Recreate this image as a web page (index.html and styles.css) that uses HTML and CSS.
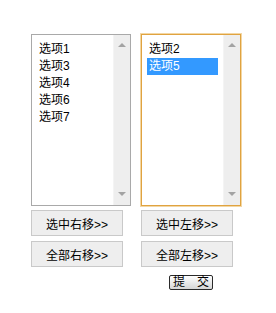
FILE: index.html
```
<!DOCTYPE html>
<html lang="zh-CN">

<head>
    <meta charset="UTF-8">
    <meta name="viewport" content="width=device-width, initial-scale=1.0">
    <title>选项移动</title>
    <link rel="stylesheet" href="styles.css">
</head>

<body>
    <div class="wrap">
        <div class="col">
            <div class="listbox">
                <ul class="items">
                    <li>选项1</li>
                    <li>选项3</li>
                    <li>选项4</li>
                    <li>选项6</li>
                    <li>选项7</li>
                </ul>
                <div class="bar">
                    <span class="up"></span>
                    <span class="down"></span>
                </div>
            </div>
            <button class="btn">选中右移&gt;&gt;</button>
            <button class="btn">全部右移&gt;&gt;</button>
        </div>
        <div class="col">
            <div class="listbox focus">
                <ul class="items">
                    <li>选项2</li>
                    <li class="active">选项5</li>
                </ul>
                <div class="bar">
                    <span class="up"></span>
                    <span class="down"></span>
                </div>
            </div>
            <button class="btn">选中左移&gt;&gt;</button>
            <button class="btn">全部左移&gt;&gt;</button>
            <button class="submit">提　交</button>
        </div>
    </div>
</body>

</html>
```

FILE: styles.css
```
* {
    margin: 0;
    padding: 0;
    box-sizing: border-box;
}

body {
    font-family: "Liberation Sans", "Noto Sans CJK SC", sans-serif;
    font-size: 12px;
    color: #000;
    background: #fff;
}

li {
    list-style: none;
}

.wrap {
    display: flex;
    gap: 10px;
    padding: 34px 0 0 31px;
}

.col {
    width: 100px;
    display: flex;
    flex-direction: column;
    align-items: flex-start;
}

.listbox {
    width: 100px;
    height: 172px;
    border: 1px solid #a9a9a9;
    display: flex;
    background: #fff;
}

.listbox.focus {
    border-color: #e0a340;
    box-shadow: 0 0 0 1px #f3d7a4;
}

.listbox .items {
    flex: 1;
    padding: 6px 5px;
}

.listbox .items li {
    height: 17px;
    line-height: 17px;
    padding-left: 2px;
    white-space: nowrap;
}

.listbox .items li.active {
    background: #3399ff;
    color: #fff;
}

.bar {
    width: 17px;
    background: #eeeeee;
    border-left: 1px solid #f4f4f4;
    display: flex;
    flex-direction: column;
    justify-content: space-between;
    align-items: center;
    padding: 8px 0 9px;
}

.bar span {
    width: 0;
    height: 0;
    border-left: 4px solid transparent;
    border-right: 4px solid transparent;
}

.bar .up {
    border-bottom: 4px solid #a3a3a3;
}

.bar .down {
    border-top: 4px solid #a3a3a3;
}

.btn {
    width: 92px;
    height: 26px;
    margin-top: 4px;
    border: 1px solid #c9c9c9;
    background: #eeeeee;
    font-family: "Liberation Sans", "Noto Sans CJK SC", sans-serif;
    font-size: 12px;
    color: #000;
}

.btn + .btn {
    margin-top: 5px;
}

.submit {
    align-self: center;
    width: 44px;
    height: 15px;
    margin-top: 8px;
    border: 1px solid #2a2a2a;
    border-radius: 2px;
    background: linear-gradient(#ffffff, #d6d6d6);
    font-family: "Liberation Sans", "Noto Sans CJK SC", sans-serif;
    font-size: 12px;
    line-height: 13px;
    color: #000;
}
```
